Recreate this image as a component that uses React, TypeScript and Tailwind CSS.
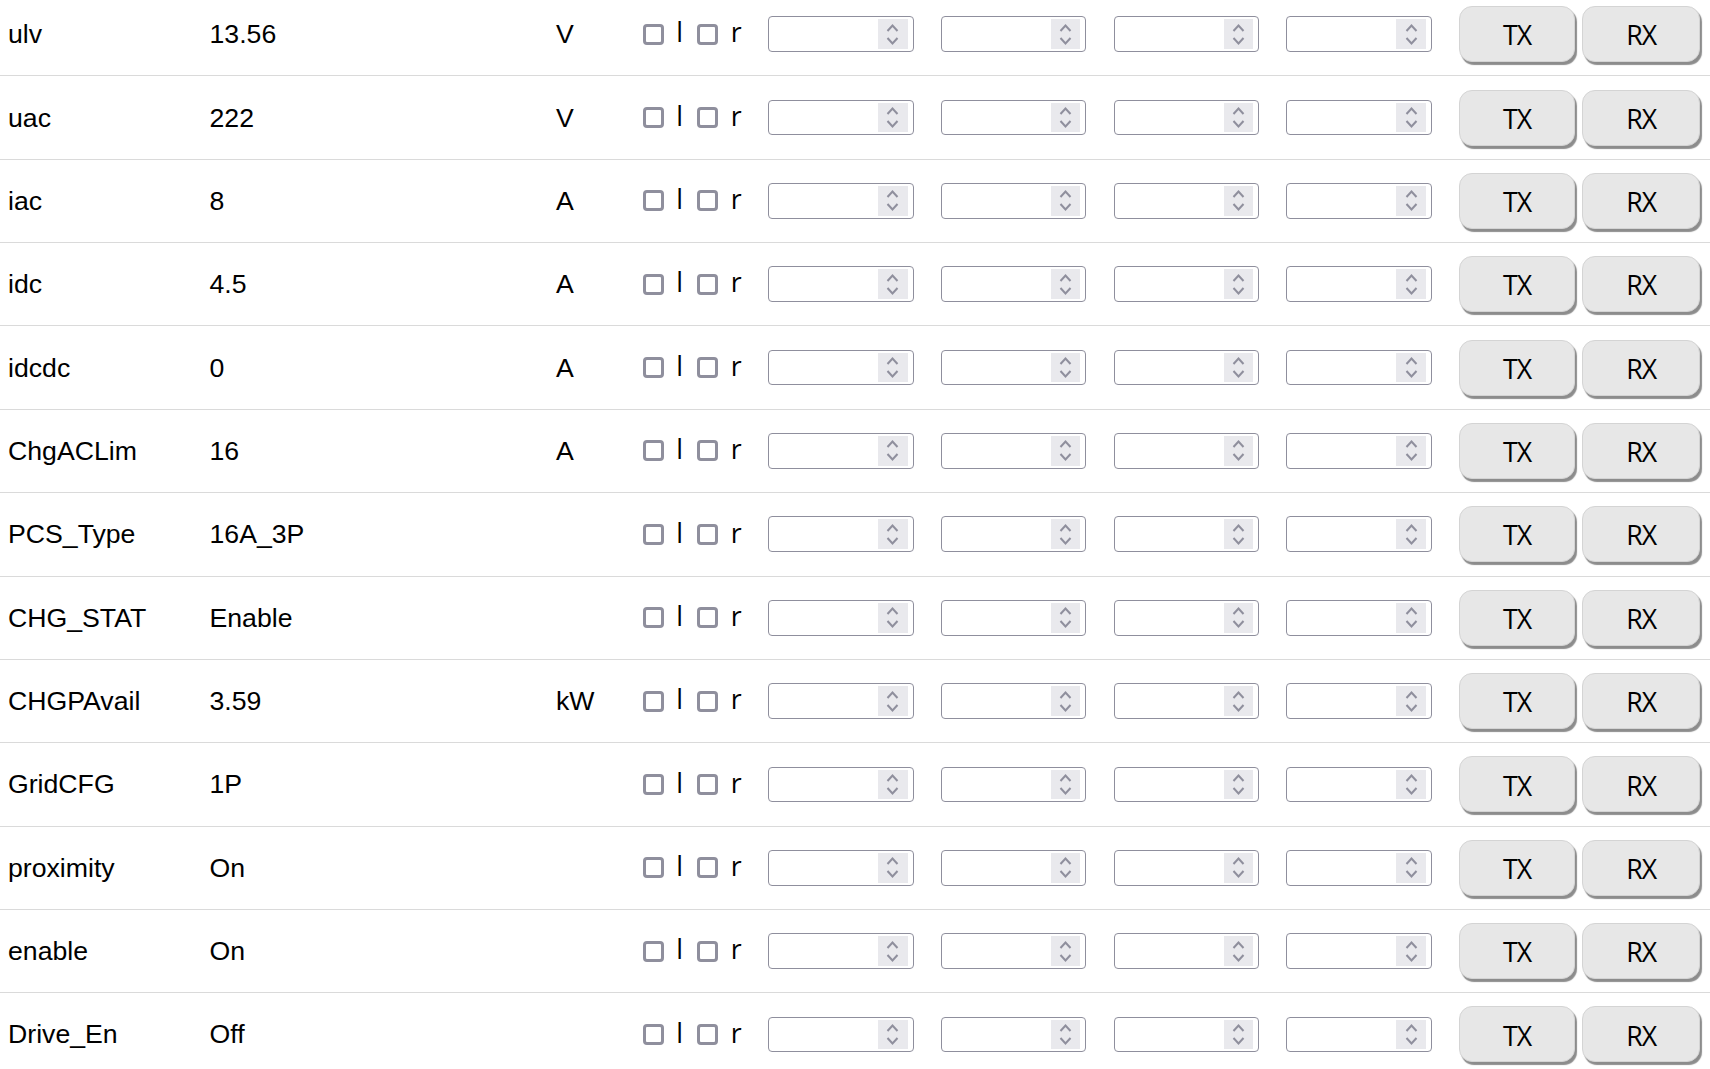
import React from "react";

type Row = { name: string; value: string; unit: string };

const ROWS: Row[] = [
  { name: "ulv", value: "13.56", unit: "V" },
  { name: "uac", value: "222", unit: "V" },
  { name: "iac", value: "8", unit: "A" },
  { name: "idc", value: "4.5", unit: "A" },
  { name: "idcdc", value: "0", unit: "A" },
  { name: "ChgACLim", value: "16", unit: "A" },
  { name: "PCS_Type", value: "16A_3P", unit: "" },
  { name: "CHG_STAT", value: "Enable", unit: "" },
  { name: "CHGPAvail", value: "3.59", unit: "kW" },
  { name: "GridCFG", value: "1P", unit: "" },
  { name: "proximity", value: "On", unit: "" },
  { name: "enable", value: "On", unit: "" },
  { name: "Drive_En", value: "Off", unit: "" },
];

const arial = { fontFamily: '"Liberation Sans", Arial, sans-serif' };

function Spin() {
  return (
    <div className="w-[29.4px] h-[29.7px] mr-[5px] shrink-0 bg-[#e9e9ed] flex flex-col items-center justify-center gap-[5px]">
      <svg width="13" height="8" viewBox="0 0 13 8">
        <polyline points="1.5,7 6.5,1.5 11.5,7" fill="none" stroke="#8f8f9d" strokeWidth="2" />
      </svg>
      <svg width="13" height="8" viewBox="0 0 13 8">
        <polyline points="1.5,1 6.5,6.5 11.5,1" fill="none" stroke="#8f8f9d" strokeWidth="2" />
      </svg>
    </div>
  );
}

function NumBox() {
  return (
    <div className="w-[145.4px] h-[35.7px] shrink-0 border border-[#8f8f9d] rounded-[4px] bg-white flex items-center">
      <input type="text" className="flex-1 min-w-0 h-full bg-transparent outline-none px-2" />
      <Spin />
    </div>
  );
}

function Check() {
  return (
    <input
      type="checkbox"
      className="appearance-none w-[21px] h-[21px] shrink-0 border-[3px] border-[#8f8f9d] rounded-[4px] bg-white m-0"
    />
  );
}

function Btn({ label }: { label: string }) {
  return (
    <button
      className="w-full h-[56px] pt-[3px] rounded-[13px] bg-[#e7e7e7] border border-[#d4d4d4] shadow-[2px_3px_1px_rgba(0,0,0,0.45)] text-black text-[26.67px] leading-none tracking-[-1px]"
      style={{ fontFamily: '"Open Sans", "Noto Sans", sans-serif' }}
    >
      {label}
    </button>
  );
}

export default function App() {
  return (
    <main className="w-[1710px] h-[1069px] overflow-hidden bg-white text-black">
      <div className="-mt-[7px]">
        {ROWS.map((r) => (
          <div
            key={r.name}
            className="h-[83.36px] border-b border-[#dadada] flex items-center"
          >
            <div className="w-[209.5px] pl-2 text-[26.67px] shrink-0" style={arial}>
              {r.name}
            </div>
            <div className="w-[346.5px] text-[26.67px] shrink-0" style={arial}>
              {r.value}
            </div>
            <div className="w-[86.7px] text-[26.67px] shrink-0" style={arial}>
              {r.unit}
            </div>
            <div
              className="flex items-center text-[26.67px] leading-none"
              style={{ fontFamily: '"Open Sans", "Noto Sans", sans-serif' }}
            >
              <Check />
              <span className="w-[33.6px] pl-[12.5px] pb-[3px]">l</span>
              <Check />
              <span className="w-[50px] pl-[12.5px] pb-[3px]">r</span>
            </div>
            <div className="flex items-center gap-[27.3px]">
              <NumBox />
              <NumBox />
              <NumBox />
              <NumBox />
              <div className="flex items-center gap-[7.3px]">
                <div className="w-[116px]">
                  <Btn label="TX" />
                </div>
                <div className="w-[117.7px]">
                  <Btn label="RX" />
                </div>
              </div>
            </div>
          </div>
        ))}
      </div>
    </main>
  );
}
